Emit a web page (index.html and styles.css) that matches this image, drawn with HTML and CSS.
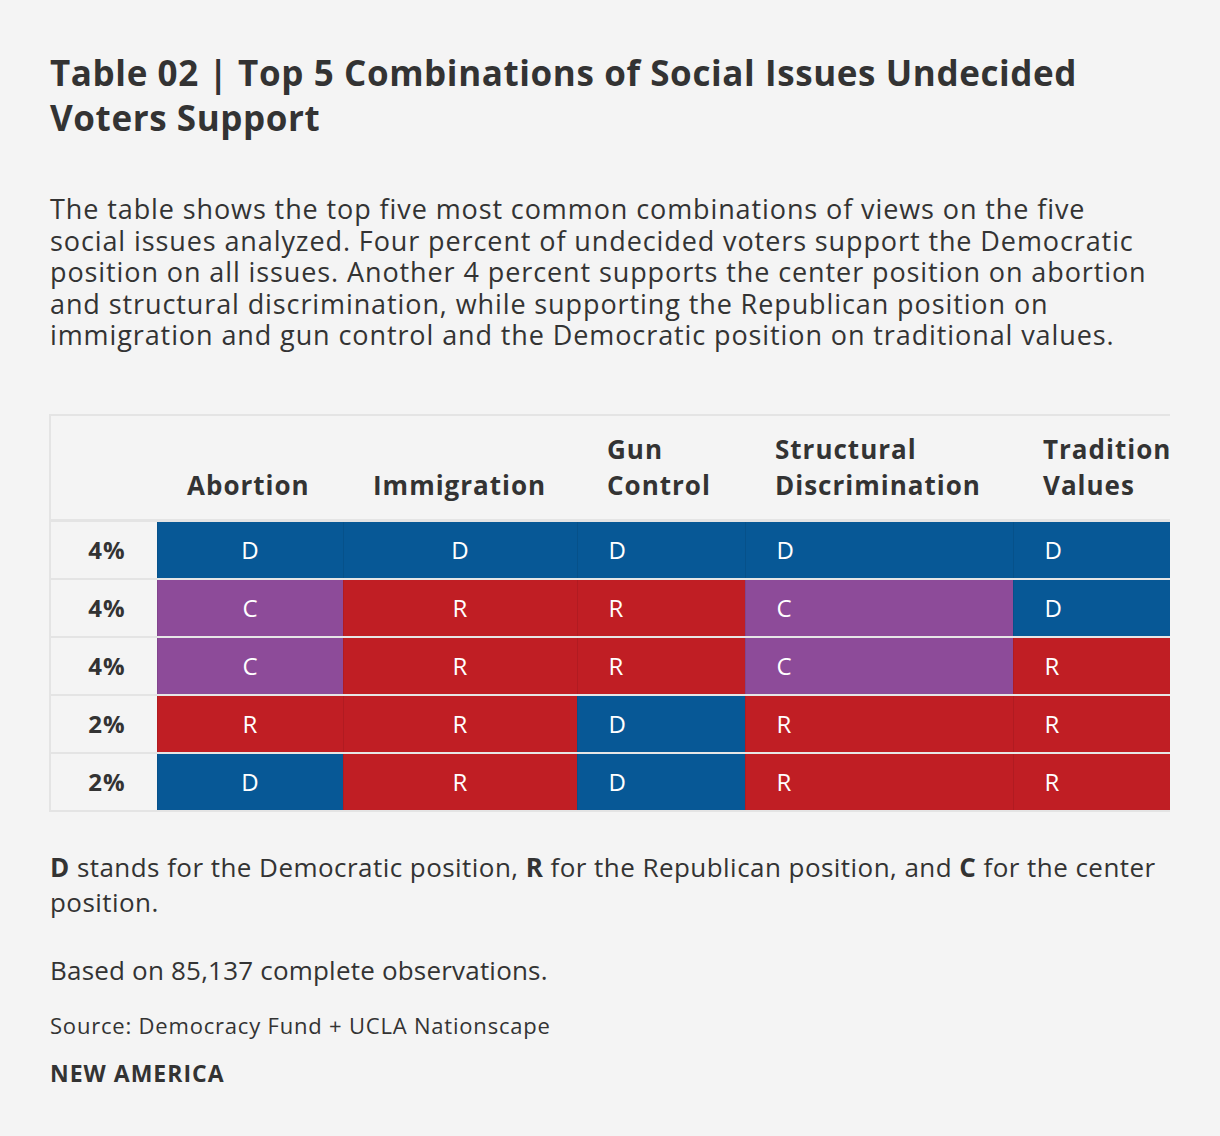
FILE: index.html
```html
<!DOCTYPE html>
<html>
<head>
<meta charset="utf-8">
<link rel="stylesheet" href="styles.css">
</head>
<body>
<div class="page">
  <h1 class="title">Table 02 | Top 5 Combinations of Social Issues Undecided Voters Support</h1>
  <p class="desc">The table shows the top five most common combinations of views on the five social issues analyzed. Four percent of undecided voters support the Democratic position on all issues. Another 4 percent supports the center position on abortion and structural discrimination, while supporting the Republican position on immigration and gun control and the Democratic position on traditional values.</p>
  <div class="table-wrap">
    <table class="data">
      <colgroup>
        <col class="c0"><col class="c1"><col class="c2"><col class="c3"><col class="c4"><col class="c5">
      </colgroup>
      <thead>
        <tr>
          <th></th>
          <th>Abortion</th>
          <th>Immigration</th>
          <th>Gun<br>Control</th>
          <th>Structural<br>Discrimination</th>
          <th>Traditional<br>Values</th>
        </tr>
      </thead>
      <tbody>
        <tr>
          <td class="lbl">4%</td>
          <td class="d ctr">D</td><td class="d ctr">D</td><td class="d">D</td><td class="d">D</td><td class="d">D</td>
        </tr>
        <tr>
          <td class="lbl">4%</td>
          <td class="c ctr">C</td><td class="r ctr">R</td><td class="r">R</td><td class="c">C</td><td class="d">D</td>
        </tr>
        <tr>
          <td class="lbl">4%</td>
          <td class="c ctr">C</td><td class="r ctr">R</td><td class="r">R</td><td class="c">C</td><td class="r">R</td>
        </tr>
        <tr>
          <td class="lbl">2%</td>
          <td class="r ctr">R</td><td class="r ctr">R</td><td class="d">D</td><td class="r">R</td><td class="r">R</td>
        </tr>
        <tr>
          <td class="lbl">2%</td>
          <td class="d ctr">D</td><td class="r ctr">R</td><td class="d">D</td><td class="r">R</td><td class="r">R</td>
        </tr>
      </tbody>
    </table>
  </div>
  <p class="note"><b>D</b> stands for the Democratic position, <b>R</b> for the Republican position, and <b>C</b> for the center position.</p>
  <p class="note obs">Based on 85,137 complete observations.</p>
  <p class="source">Source: Democracy Fund + UCLA Nationscape</p>
  <p class="brand">NEW AMERICA</p>
</div>
</body>
</html>
```

FILE: styles.css
```css
html, body {
  margin: 0;
  padding: 0;
  background: #f4f4f4;
}
body {
  font-family: "Open Sans", "Noto Sans", sans-serif;
  color: #333333;
}
.page {
  width: 1120px;
  padding: 50px 50px 40px 50px;
}
.title {
  margin: 0;
  font-size: 35px;
  line-height: 45px;
  font-weight: 700;
  letter-spacing: 0.6px;
  color: #333333;
}
.desc {
  margin: 53px 0 0 0;
  max-width: 1100px;
  font-size: 27px;
  line-height: 31.6px;
  letter-spacing: 0.9px;
}
.table-wrap {
  margin-top: 63px;
  width: 1121px;
  margin-left: -1px;
  overflow: hidden;
}
.data {
  border-collapse: collapse;
  table-layout: fixed;
  width: 1300px;
  border-top: 2px solid #e4e4e4;
  border-left: 2px solid #e4e4e4;
  border-bottom: 2px solid #e4e4e4;
}
.c0 { width: 107px; }
.c1 { width: 186px; }
.c2 { width: 234px; }
.c3 { width: 168px; }
.c4 { width: 268px; }
.c5 { width: 337px; }
.data th {
  height: 87px;
  padding: 0 0 16px 30px;
  text-align: left;
  vertical-align: bottom;
  font-size: 26px;
  line-height: 36px;
  font-weight: 700;
  letter-spacing: 1px;
  white-space: nowrap;
  border-bottom: 3px solid #e4e4e4;
}
.data td {
  height: 56px;
  padding: 0 0 0 31px;
  font-size: 24px;
  line-height: 30px;
  color: #ffffff;
  border-bottom: 2px solid #e6e6e6;
  border-left: 1px solid rgba(0, 0, 0, 0.08);
  vertical-align: middle;
}
.data tbody tr:last-child td {
  border-bottom: 0;
}
.data td.lbl {
  color: #333333;
  font-weight: 700;
  letter-spacing: 1px;
  text-align: right;
  padding: 0 31px 0 0;
  border-left: 0;
  border-bottom: 2px solid #e4e4e4;
}
.data td.ctr {
  text-align: center;
  padding: 0;
}
.d { background: #075896; }
.r { background: #c01e24; }
.c { background: #8d4b99; }
.note {
  margin: 38px 0 0 0;
  font-size: 26px;
  line-height: 35px;
  letter-spacing: 0.45px;
}
.note.obs {
  margin-top: 33px;
  letter-spacing: 0.2px;
}
.source {
  margin: 22px 0 0 0;
  font-size: 22px;
  line-height: 30px;
  letter-spacing: 0.8px;
}
.brand {
  margin: 18px 0 0 0;
  font-size: 23px;
  line-height: 30px;
  font-weight: 700;
  letter-spacing: 1px;
}
```
